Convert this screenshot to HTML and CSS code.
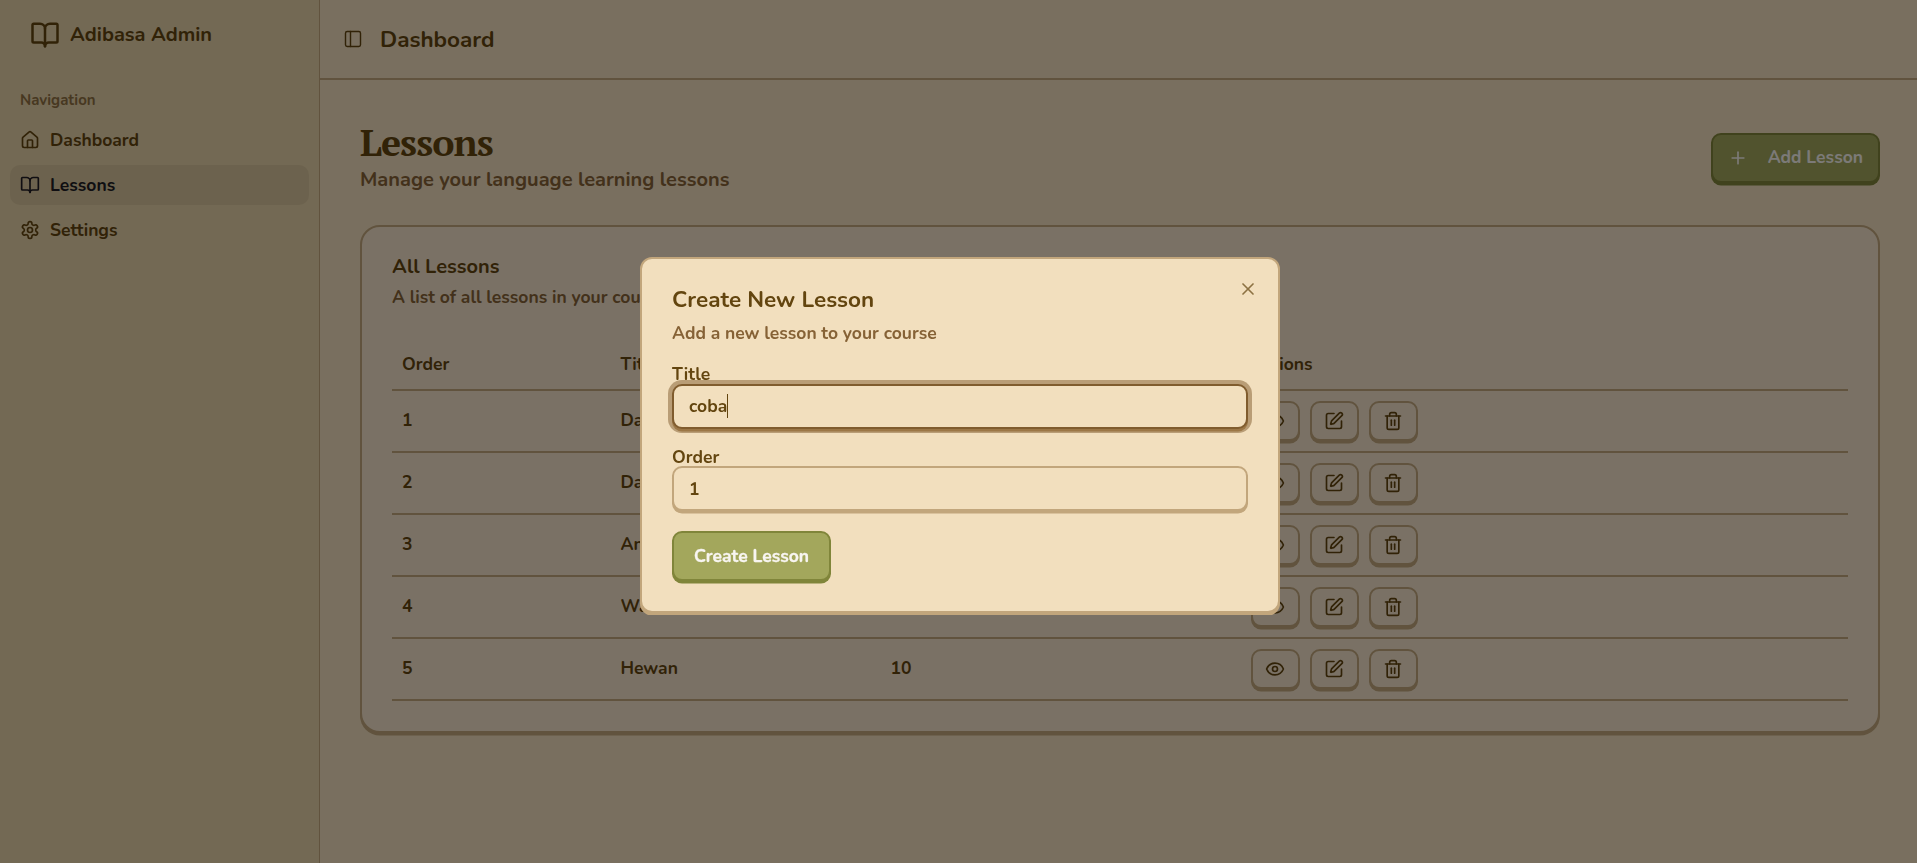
FILE: index.html
```html
<!DOCTYPE html>
<html lang="en">
<head>
<meta charset="utf-8">
<title>Adibasa Admin</title>
<link rel="stylesheet" href="styles.css">
</head>
<body>
<svg class="sprite" aria-hidden="true">
  <symbol id="book" viewBox="0 0 24 24"><path d="M12 7v14"/><path d="M3 18a1 1 0 0 1-1-1V4a1 1 0 0 1 1-1h5a4 4 0 0 1 4 4 4 4 0 0 1 4-4h5a1 1 0 0 1 1 1v13a1 1 0 0 1-1 1h-6a3 3 0 0 0-3 3 3 3 0 0 0-3-3z"/></symbol>
  <symbol id="house" viewBox="0 0 24 24"><path d="M15 21v-8a1 1 0 0 0-1-1h-4a1 1 0 0 0-1 1v8"/><path d="M3 10a2 2 0 0 1 .709-1.528l7-5.999a2 2 0 0 1 2.582 0l7 5.999A2 2 0 0 1 21 10v9a2 2 0 0 1-2 2H5a2 2 0 0 1-2-2z"/></symbol>
  <symbol id="gear" viewBox="0 0 24 24"><path d="M12.22 2h-.44a2 2 0 0 0-2 2v.18a2 2 0 0 1-1 1.73l-.43.25a2 2 0 0 1-2 0l-.15-.08a2 2 0 0 0-2.73.73l-.22.38a2 2 0 0 0 .73 2.73l.15.1a2 2 0 0 1 1 1.72v.51a2 2 0 0 1-1 1.74l-.15.09a2 2 0 0 0-.73 2.73l.22.38a2 2 0 0 0 2.73.73l.15-.08a2 2 0 0 1 2 0l.43.25a2 2 0 0 1 1 1.73V20a2 2 0 0 0 2 2h.44a2 2 0 0 0 2-2v-.18a2 2 0 0 1 1-1.73l.43-.25a2 2 0 0 1 2 0l.15.08a2 2 0 0 0 2.73-.73l.22-.39a2 2 0 0 0-.73-2.73l-.15-.08a2 2 0 0 1-1-1.74v-.5a2 2 0 0 1 1-1.74l.15-.09a2 2 0 0 0 .73-2.73l-.22-.38a2 2 0 0 0-2.73-.73l-.15.08a2 2 0 0 1-2 0l-.43-.25a2 2 0 0 1-1-1.73V4a2 2 0 0 0-2-2z"/><circle cx="12" cy="12" r="3"/></symbol>
  <symbol id="panel" viewBox="0 0 24 24"><rect width="18" height="18" x="3" y="3" rx="2"/><path d="M9 3v18"/></symbol>
  <symbol id="plus" viewBox="0 0 24 24"><path d="M5 12h14"/><path d="M12 5v14"/></symbol>
  <symbol id="close" viewBox="0 0 24 24"><path d="M18 6 6 18"/><path d="m6 6 12 12"/></symbol>
  <symbol id="eye" viewBox="0 0 24 24"><path d="M2.062 12.348a1 1 0 0 1 0-.696 10.75 10.75 0 0 1 19.876 0 1 1 0 0 1 0 .696 10.75 10.75 0 0 1-19.876 0"/><circle cx="12" cy="12" r="3"/></symbol>
  <symbol id="edit" viewBox="0 0 24 24"><path d="M12 3H5a2 2 0 0 0-2 2v14a2 2 0 0 0 2 2h14a2 2 0 0 0 2-2v-7"/><path d="M18.375 2.625a1 1 0 0 1 3 3l-9.013 9.014a2 2 0 0 1-.853.505l-2.873.84a.5.5 0 0 1-.62-.62l.84-2.873a2 2 0 0 1 .506-.852z"/></symbol>
  <symbol id="trash" viewBox="0 0 24 24"><path d="M3 6h18"/><path d="M19 6v14c0 1-1 2-2 2H7c-1 0-2-1-2-2V6"/><path d="M8 6V4c0-1 1-2 2-2h4c1 0 2 1 2 2v2"/><path d="M10 11v6"/><path d="M14 11v6"/></symbol>
</svg>

<div class="app">
  <aside class="sidebar">
    <div class="brand"><svg class="icon icon-lg"><use href="#book"/></svg><span>Adibasa Admin</span></div>
    <nav class="nav">
      <div class="nav-label">Navigation</div>
      <a class="nav-item"><svg class="icon"><use href="#house"/></svg><span>Dashboard</span></a>
      <a class="nav-item active"><svg class="icon"><use href="#book"/></svg><span>Lessons</span></a>
      <a class="nav-item"><svg class="icon"><use href="#gear"/></svg><span>Settings</span></a>
    </nav>
  </aside>
  <div class="main">
    <header class="topbar"><svg class="icon icon-thin"><use href="#panel"/></svg><span class="topbar-title">Dashboard</span></header>
    <main class="content">
      <div class="page-head">
        <div>
          <h1 class="page-title">Lessons</h1>
          <p class="page-sub">Manage your language learning lessons</p>
        </div>
        <button class="btn btn-add"><svg class="icon"><use href="#plus"/></svg><span>Add Lesson</span></button>
      </div>
      <section class="card">
        <h2 class="card-title">All Lessons</h2>
        <p class="card-desc">A list of all lessons in your course</p>
        <div class="table">
          <div class="row row-head"><span>Order</span><span>Title</span><span>Words</span><span>Actions</span></div>
          <div class="row"><span>1</span><span>Dasar 1</span><span>10</span><div class="actions"><button class="act"><svg class="icon"><use href="#eye"/></svg></button><button class="act"><svg class="icon"><use href="#edit"/></svg></button><button class="act"><svg class="icon"><use href="#trash"/></svg></button></div></div>
          <div class="row"><span>2</span><span>Dasar 2</span><span>10</span><div class="actions"><button class="act"><svg class="icon"><use href="#eye"/></svg></button><button class="act"><svg class="icon"><use href="#edit"/></svg></button><button class="act"><svg class="icon"><use href="#trash"/></svg></button></div></div>
          <div class="row"><span>3</span><span>Angka</span><span>10</span><div class="actions"><button class="act"><svg class="icon"><use href="#eye"/></svg></button><button class="act"><svg class="icon"><use href="#edit"/></svg></button><button class="act"><svg class="icon"><use href="#trash"/></svg></button></div></div>
          <div class="row"><span>4</span><span>Warna</span><span>10</span><div class="actions"><button class="act"><svg class="icon"><use href="#eye"/></svg></button><button class="act"><svg class="icon"><use href="#edit"/></svg></button><button class="act"><svg class="icon"><use href="#trash"/></svg></button></div></div>
          <div class="row"><span>5</span><span>Hewan</span><span>10</span><div class="actions"><button class="act"><svg class="icon"><use href="#eye"/></svg></button><button class="act"><svg class="icon"><use href="#edit"/></svg></button><button class="act"><svg class="icon"><use href="#trash"/></svg></button></div></div>
        </div>
      </section>
    </main>
  </div>
</div>

<div class="backdrop"></div>
<div class="dialog" role="dialog">
  <h2 class="dialog-title">Create New Lesson</h2>
  <p class="dialog-desc">Add a new lesson to your course</p>
  <label class="label">Title</label>
  <div class="input focused"><span>coba</span><i class="caret"></i></div>
  <label class="label">Order</label>
  <div class="input number"><span>1</span></div>
  <button class="btn btn-create">Create Lesson</button>
  <svg class="icon dialog-close"><use href="#close"/></svg>
</div>
</body>
</html>
```
FILE: styles.css
```css
* { box-sizing: border-box; margin: 0; padding: 0; }
:root {
  --bg: #f2dfbe;
  --card: #f4e3cb;
  --side: #e6d2a8;
  --line: #c2a67c;
  --text: #63450f;
  --muted: #866236;
  --green: #a3a75c;
  --green-dark: #80853a;
}
html { font-size: 20px; overflow: hidden; }
body {
  width: 1920px;
  height: 863px;
  overflow: hidden;
  background: var(--bg);
  color: var(--text);
  font-family: Nunito, Lato, "Open Sans", sans-serif;
  font-size: 17.5px;
  font-weight: 700;
  line-height: 25px;
}
button { font: inherit; color: inherit; }
.sprite { display: none; }
.icon {
  width: 20px;
  height: 20px;
  flex: none;
  fill: none;
  stroke: currentColor;
  stroke-width: 2;
  stroke-linecap: round;
  stroke-linejoin: round;
}
.icon-lg { width: 30px; height: 30px; }
.icon-thin { stroke-width: 1.7; }

.app { display: flex; height: 100%; }
.sidebar { width: 320px; flex: none; background: var(--side); border-right: 1px solid var(--line); }
.brand { display: flex; align-items: center; gap: 10px; height: 70px; padding: 0 30px 1px; font-size: 20px; }
.nav { display: flex; flex-direction: column; gap: 5px; padding: 10px; }
.nav-label { height: 40px; margin-bottom: -5px; padding-left: 10px; font-size: 15px; line-height: 40px; color: #8f7042; }
.nav-item { display: flex; align-items: center; gap: 10px; height: 40px; padding: 0 10px; border-radius: 10px; }
.nav-item.active { background: #d9c59c; color: #201c24; }

.main { flex: 1; display: flex; flex-direction: column; }
.topbar { display: flex; align-items: center; gap: 17px; height: 80px; padding-left: 23px; border-bottom: 2px solid var(--line); }
.topbar-title { font-size: 22.5px; }
.content { padding: 40px; }
.page-head { display: flex; justify-content: space-between; align-items: center; margin-bottom: 30px; }
.page-title { font: bold 37.5px/45px "PT Serif", "Liberation Serif", serif; letter-spacing: -0.025em; }
.page-sub { font-size: 20px; line-height: 30px; color: var(--muted); }

.btn {
  display: flex;
  align-items: center;
  height: 50px;
  border: 2px solid var(--green-dark);
  border-radius: 10px;
  background: var(--green);
  box-shadow: 0 2.5px 0 var(--green-dark);
  color: #f8f5f1;
}
.btn-add { width: 169px; justify-content: space-between; padding: 0 15px; white-space: nowrap; }
.btn-create {
  width: 159px;
  justify-content: center;
  margin-top: 20px;
  white-space: nowrap;
  -webkit-text-stroke: 0.3px #f8f5f1;
}

.card {
  height: 508px;
  padding: 30px;
  border: 2px solid var(--line);
  border-radius: 20px;
  background: var(--card);
  box-shadow: 0 2.5px 0 var(--line);
}
.card-title { font-size: 20px; line-height: 20px; font-weight: 700; margin-bottom: 8px; }
.card-desc { color: var(--muted); margin-bottom: 29px; }
.row {
  display: grid;
  grid-template-columns: 218.5px 270px 360.5px 1fr;
  align-items: center;
  height: 62px;
  border-bottom: 2px solid var(--line);
}
.row > * { padding-left: 10px; }
.row > span { padding-bottom: 1px; }
.row-head { height: 52px; }
.row-head > span { padding-bottom: 0; }
.actions { display: flex; gap: 10px; }
.act {
  display: flex;
  align-items: center;
  justify-content: flex-start;
  width: 49px;
  height: 40px;
  padding-left: 12px;
  border: 2px solid var(--line);
  border-radius: 10px;
  background: var(--card);
  box-shadow: 0 2.5px 0 var(--line);
}

.backdrop { position: fixed; inset: 0; background: rgba(0, 0, 0, 0.5); }
.dialog {
  position: absolute;
  left: 640px;
  top: 257px;
  width: 640px;
  height: 355.5px;
  padding: 29px 30px 30px;
  border: 2px solid var(--line);
  border-radius: 12px;
  background: var(--bg);
  box-shadow: 0 2.5px 0 var(--line);
}
.dialog-title { font-size: 22.5px; line-height: 23px; font-weight: 700; margin-bottom: 10px; }
.dialog-desc { color: var(--muted); margin-bottom: 20px; }
.label { display: block; height: 17.5px; line-height: 17.5px; }
.input {
  display: flex;
  align-items: center;
  height: 45px;
  padding: 0 15px;
  border: 2px solid var(--line);
  border-radius: 10px;
  background: var(--bg);
  box-shadow: 0 2.5px 0 var(--line);
}
.input.number { padding-top: 1px; }
.input + .label { margin-top: 20px; }
.input.focused {
  position: relative;
  border-color: #805c2e;
  box-shadow: 0 0 0 4px rgba(128, 92, 46, 0.5), 0 2.5px 0 #b8935f;
}
.caret { width: 1px; height: 24px; background: var(--text); }
.dialog-close { position: absolute; right: 20px; top: 20px; opacity: 0.7; }
```
